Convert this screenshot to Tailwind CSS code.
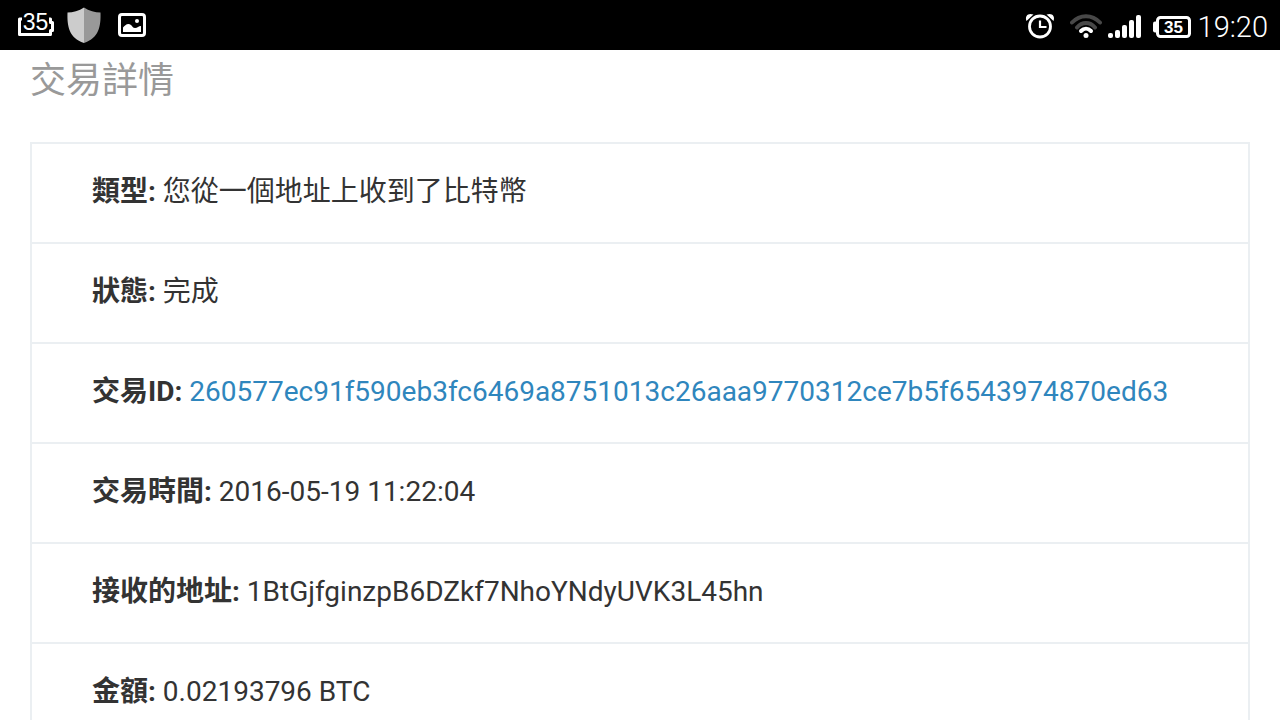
<!DOCTYPE html>
<html lang="zh-Hant">
<head>
  <meta charset="UTF-8" />
  <meta name="viewport" content="width=device-width, initial-scale=1" />
  <title>交易詳情</title>
  <script src="https://cdn.jsdelivr.net/npm/@tailwindcss/browser@4"></script>
</head>
<body class="bg-white text-[#333333] font-[Roboto,'Noto_Sans_CJK_TC',sans-serif] h-screen overflow-hidden">
  <!-- status bar -->
  <header class="h-[50px] bg-black text-white flex items-center justify-between pl-4 pr-3">
    <div class="flex items-center">
      <svg class="w-10 h-[50px]" viewBox="16 0 40 50" fill="none" aria-hidden="true">
        <path d="M22 19H19.500V34.500H50.500V30.500H52.500V22.500H50.500V19H49" stroke="#fff" stroke-width="3" stroke-linejoin="round" />
        <text x="35.500" y="30" fill="#fff" text-anchor="middle" class="text-[23px] font-['Liberation_Sans',sans-serif]">35</text>
      </svg>
      <svg class="w-9 h-[50px] ml-[10px]" viewBox="66 0 36 50" aria-hidden="true">
        <path d="M84 7.500C79 11 73 12.500 67.500 12.500C67 26 69 38 84 43Z" fill="#cccccc" />
        <path d="M84 7.500C89 11 95 12.500 100.500 12.500C101 26 99 38 84 43Z" fill="#999999" />
      </svg>
      <svg class="w-[30px] h-[50px] ml-[15px]" viewBox="117 0 30 50" aria-hidden="true">
        <rect x="119.500" y="14.500" width="25" height="21" rx="2.500" fill="none" stroke="#fff" stroke-width="3" />
        <path d="M123 32V27.500C124.500 26 126 24 128.500 24C132 24 132 28 135 28C137.500 28 138.500 26 141 26V32Z" fill="#fff" />
        <circle cx="137" cy="21" r="2" fill="#fff" />
      </svg>
    </div>
    <div class="flex items-center">
      <svg class="w-8 h-[50px]" viewBox="1024 0 32 50" fill="none" stroke="#fff" aria-hidden="true">
        <circle cx="1040" cy="26.500" r="10.500" stroke-width="2.800" />
        <path d="M1040 20.500V27H1046.500" stroke-width="2.200" />
        <path d="M1026.500 21C1024.500 15.500 1028.500 12.500 1033.500 14.500Z M1053.500 21C1055.500 15.500 1051.500 12.500 1046.500 14.500Z" fill="#fff" stroke="none" />
      </svg>
      <svg class="w-8 h-[50px] ml-[14px]" viewBox="1070 0 32 50" fill="none" stroke-linecap="round" stroke-width="4" aria-hidden="true">
        <path d="M1072 22.500C1080 14 1092 14 1100 22.500M1077 27.500C1082 21.500 1090 21.500 1095 27.500" stroke="#484848" />
        <path d="M1081 31C1084 28 1088 28 1091 31" stroke="#fff" />
        <circle cx="1086" cy="35.500" r="2.500" fill="#fff" />
      </svg>
      <svg class="w-[34px] h-[50px] ml-[6px]" viewBox="1108 0 34 50" fill="#fff" aria-hidden="true">
        <rect x="1108" y="33" width="5" height="5" rx="2" />
        <rect x="1115" y="30" width="5" height="8" rx="2" />
        <rect x="1122" y="25" width="5" height="13" rx="2" />
        <rect x="1129" y="20" width="5" height="18" rx="2" />
        <rect x="1136" y="15" width="5" height="23" rx="2" />
      </svg>
      <svg class="w-10 h-[50px] ml-[10px]" viewBox="1152 0 40 50" aria-hidden="true">
        <rect x="1157.500" y="17.500" width="32" height="19" rx="3" fill="none" stroke="#fff" stroke-width="3" />
        <rect x="1153" y="21.500" width="5" height="11" rx="2" fill="#fff" />
        <text x="1173.500" y="33" fill="#fff" text-anchor="middle" class="text-[17px] font-bold font-['Liberation_Sans',sans-serif]">35</text>
      </svg>
      <time class="ml-[6px] pt-1 text-[29px] leading-8 font-light">19:20</time>
    </div>
  </header>

  <main class="px-[30px]">
    <h1 class="h-[60px] text-4xl leading-[62px] text-[#999999]">交易詳情</h1>
    <ul class="mt-8 border-2 border-b-0 border-[#ebeff2] text-[28px] leading-[40px]">
      <li class="px-[60px] pt-7 pb-[30px] border-b-2 border-[#ebeff2]"><strong>類型:</strong> 您從一個地址上收到了比特幣</li>
      <li class="px-[60px] pt-7 pb-[30px] border-b-2 border-[#ebeff2]"><strong>狀態:</strong> 完成</li>
      <li class="px-[60px] pt-7 pb-[30px] border-b-2 border-[#ebeff2]"><strong>交易ID:</strong> <a href="#" class="text-[#2f86bd]">260577ec91f590eb3fc6469a8751013c26aaa9770312ce7b5f6543974870ed63</a></li>
      <li class="px-[60px] pt-7 pb-[30px] border-b-2 border-[#ebeff2]"><strong>交易時間:</strong> 2016-05-19 11:22:04</li>
      <li class="px-[60px] pt-7 pb-[30px] border-b-2 border-[#ebeff2]"><strong>接收的地址:</strong> 1BtGjfginzpB6DZkf7NhoYNdyUVK3L45hn</li>
      <li class="px-[60px] pt-7 pb-[30px] border-b-2 border-[#ebeff2]"><strong>金額:</strong> 0.02193796 BTC</li>
    </ul>
  </main>
</body>
</html>
